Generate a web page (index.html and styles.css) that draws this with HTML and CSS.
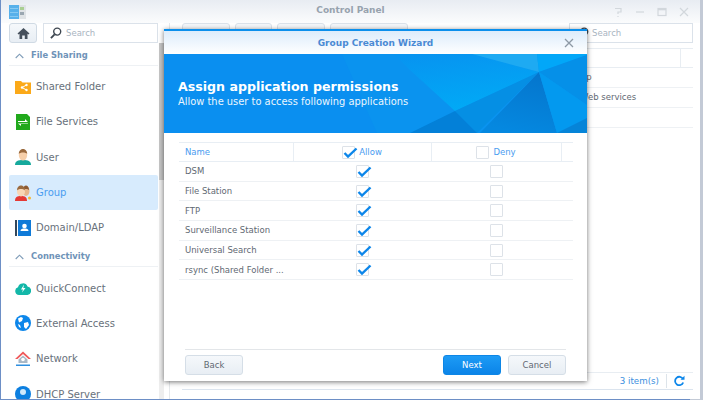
FILE: index.html
```html
<!DOCTYPE html>
<html lang="en">
<head>
<meta charset="utf-8">
<title>Control Panel</title>
<link rel="stylesheet" href="styles.css">
</head>
<body>
<div class="window">
  <header class="titlebar">
    <svg class="app-logo" width="17" height="14" viewBox="0 0 17 14"><rect x="0" y="0" width="10" height="14" fill="#57b0ea"/><rect x="1" y="3" width="8" height="1" fill="#86c9f2"/><rect x="1" y="7" width="8" height="1" fill="#86c9f2"/><rect x="1" y="11" width="8" height="1" fill="#86c9f2"/><rect x="10" y="0" width="7" height="14" fill="#dfe3e6"/><rect x="11" y="2" width="4" height="3" fill="#a9cf93"/><rect x="11" y="7" width="4" height="3" fill="#9aa7b1"/></svg>
    <span class="title">Control Panel</span>
    <div class="win-controls">
      <svg width="12" height="12" viewBox="0 0 12 12"><path d="M3 2.500h6v3.500H6v2M6 10v1" fill="none" stroke="#d2d7dc" stroke-width="1.200"/></svg>
      <svg width="12" height="12" viewBox="0 0 12 12"><path d="M2 6h8" stroke="#d2d7dc" stroke-width="1.200"/></svg>
      <svg width="12" height="12" viewBox="0 0 12 12"><rect x="2" y="2.500" width="8" height="7" fill="none" stroke="#d2d7dc" stroke-width="1.200"/><path d="M2 3.500h8" stroke="#d2d7dc" stroke-width="1.600"/></svg>
      <svg width="12" height="12" viewBox="0 0 12 12"><path d="M2 2l8 8M10 2l-8 8" stroke="#d2d7dc" stroke-width="1.200"/></svg>
    </div>
  </header>
  <div class="body">
    <aside class="sidebar">
      <div class="side-top">
        <button class="home-btn"><svg width="13" height="13" viewBox="0 0 13 13"><path d="M6.500 1L0.500 6.500 1.500 7.500 2.500 6.700V12H5.200V8.500H7.800V12H10.500V6.700L11.500 7.500 12.500 6.500Z" fill="#46505c"/></svg></button>
        <div class="search side-search">
          <svg width="12" height="12" viewBox="0 0 13 13"><circle cx="7.800" cy="5" r="3.800" fill="none" stroke="#3d4650" stroke-width="1.500"/><path d="M5 8L1 12" stroke="#3d4650" stroke-width="2"/></svg>
          <span>Search</span>
        </div>
      </div>
      <div class="section"><svg width="9" height="6" viewBox="0 0 9 6"><path d="M0.700 5L4.500 1.200 8.300 5" fill="none" stroke="#7f9cb8" stroke-width="1.100"/></svg><span>File Sharing</span></div>
      <div class="item">
        <svg width="16" height="14" viewBox="0 0 16 14"><path d="M0 1h6l1.500 1.500H16V14H0Z" fill="#fba919"/><circle cx="7" cy="7.500" r="1.200" fill="#fff"/><circle cx="11.500" cy="5" r="1.200" fill="#fff"/><circle cx="11.500" cy="10" r="1.200" fill="#fff"/><path d="M7 7.500L11.500 5M7 7.500L11.500 10" stroke="#fff"/></svg>
        <span>Shared Folder</span></div>
      <div class="item">
        <svg width="16" height="16" viewBox="0 0 16 16"><path d="M1 0h11l3 3v13H1Z" fill="#21a91c"/><path d="M3 7h7V5l3 3H3zM13 10H6v2L3 9.500h10z" fill="#fff"/></svg>
        <span>File Services</span></div>
      <div class="item">
        <svg width="16" height="16" viewBox="0 0 16 16"><path d="M0 16c0-4 3-5 8-5s8 1 8 5Z" fill="#16a99c"/><ellipse cx="8" cy="6" rx="4.200" ry="5.500" fill="#f6cfaa"/><path d="M3.800 5C3.800 1.500 6 0 8 0s4.200 1.500 4.200 5C11 3 5 3 3.800 5Z" fill="#9a6a3e"/></svg>
        <span>User</span></div>
      <div class="item active">
        <svg width="16" height="16" viewBox="0 0 16 16"><path d="M0 16c0-4 2-5 6-5s6 1 6 5Z" fill="#e53935"/><ellipse cx="11" cy="6" rx="3.500" ry="5" fill="#e8b68c"/><path d="M8 5c0-3 1.500-4.500 3-4.500S14 2 14 5C13 3.500 9 3.500 8 5Z" fill="#8c5a32"/><ellipse cx="6" cy="6.500" rx="4" ry="5" fill="#f8d6b5"/><path d="M2 5.500C2 2 4 .5 6 .5S10 2 10 5.500C9 3.500 3 3.500 2 5.500Z" fill="#9a6a3e"/><circle cx="14.500" cy="13" r="1.500" fill="#f7b731"/></svg>
        <span>Group</span></div>
      <div class="item">
        <svg width="16" height="16" viewBox="0 0 16 16"><rect x="0" y="0" width="2" height="16" fill="#33475b"/><rect x="3" y="0" width="13" height="16" fill="#0f7ad8"/><circle cx="9.500" cy="6" r="2.300" fill="#fff"/><path d="M5.500 11c0-2 2-2.500 4-2.500s4 .5 4 2.500Z" fill="#fff"/></svg>
        <span>Domain/LDAP</span></div>
      <div class="section conn"><svg width="9" height="6" viewBox="0 0 9 6"><path d="M0.700 5L4.500 1.200 8.300 5" fill="none" stroke="#7f9cb8" stroke-width="1.100"/></svg><span>Connectivity</span></div>
      <div class="item">
        <svg width="16" height="13" viewBox="0 0 16 13"><path d="M4 13A4 4 0 0 1 3 5.200 5 5 0 0 1 12.500 4.500 4.300 4.300 0 0 1 12.500 13Z" fill="#13b7a8"/><path d="M9 2.500L6 7.500h2L7 10.500 10.500 6H8.300Z" fill="#fff"/></svg>
        <span>QuickConnect</span></div>
      <div class="item">
        <svg width="16" height="16" viewBox="0 0 16 16"><circle cx="8" cy="8" r="8" fill="#0c86ea"/><path d="M3 3.500l3-1.500 2 1-1 3-3 1.500zM9 8l4-1 1 3-3 4-2-2zM3 9l2 1 1 3-2-1z" fill="#fff"/></svg>
        <span>External Access</span></div>
      <div class="item">
        <svg width="16" height="16" viewBox="0 0 16 16"><path d="M8 0.500L0 8h2.500L8 3l5.500 5H16Z" fill="#f0595a"/><path d="M3.500 8.500L8 4.500l4.500 4V12h-9Z" fill="#a9b8c6"/><circle cx="8" cy="8.500" r="1.800" fill="#fff"/><rect x="1" y="13.500" width="14" height="1.500" fill="#2f8fe0"/></svg>
        <span>Network</span></div>
      <div class="item">
        <svg width="16" height="16" viewBox="0 0 16 16"><circle cx="8" cy="8" r="8" fill="#0c7fe0"/><circle cx="8" cy="6" r="3" fill="#cfe8fb"/></svg>
        <span>DHCP Server</span></div>
    </aside>
    <div class="scrollbar"></div>
    <main class="main">
      <div class="toolbar">
        <div class="tool w48"></div><div class="tool w37"></div><div class="tool w48"></div><div class="tool w78"></div>
        <div class="search main-search">
          <svg width="12" height="12" viewBox="0 0 13 13"><circle cx="7.800" cy="5" r="3.800" fill="none" stroke="#3d4650" stroke-width="1.500"/><path d="M5 8L1 12" stroke="#3d4650" stroke-width="2"/></svg>
          <span>Search</span>
        </div>
      </div>
      <div class="grid">
        <div class="grid-head"><i></i></div>
        <div class="grid-row">Up</div>
        <div class="grid-row">Web services</div>
        <div class="grid-row"></div>
      </div>
      <div class="statusbar"><span class="count">3 item(s)</span>
        <svg width="12" height="12" viewBox="0 0 12 12"><path d="M10 4A4.200 4.200 0 1 0 10.200 7.500" fill="none" stroke="#0c86ea" stroke-width="1.800"/><path d="M7.500 4.800H11.500V.8Z" fill="#0c86ea"/></svg>
      </div>
    </main>
  </div>
</div>

<section class="dialog">
  <div class="dialog-head">
    <span>Group Creation Wizard</span>
    <svg width="10" height="10" viewBox="0 0 10 10"><path d="M1 1l8 8M9 1l-8 8" stroke="#8d99a5" stroke-width="1.300"/></svg>
  </div>
  <div class="banner">
    <svg class="facets" width="423" height="79" viewBox="0 0 423 79">
      <defs>
        <linearGradient id="bright" x1="0.200" y1="0" x2="0.500" y2="1"><stop offset="0" stop-color="#0794f0"/><stop offset="1" stop-color="#01aaf6"/></linearGradient>
        <linearGradient id="dark" x1="0.800" y1="0" x2="0.500" y2="1"><stop offset="0" stop-color="#0575cc"/><stop offset="1" stop-color="#0588e0"/></linearGradient>
      </defs>
      <path d="M178 0H423V79H213Z" fill="#0a93ef"/>
      <path d="M246 16L291 57 375 18 308 0H230Z" fill="url(#bright)"/>
      <path d="M308 0H373L375 18Z" fill="#1eaaf2"/>
      <path d="M373 0H423V1L375 18Z" fill="#02a7f8"/>
      <path d="M423 1V51L375 18Z" fill="#0590e8"/>
      <path d="M291 57L375 18 313 79Z" fill="#058fe4"/>
      <path d="M246 79L291 57 313 79Z" fill="#0380d8"/>
      <path d="M316 79L375 18 393 79Z" fill="url(#dark)"/>
      <path d="M375 18L423 51V64L393 79Z" fill="#0399ef"/>
      <path d="M393 79L423 64V79Z" fill="#0584d8"/>
    </svg>
    <h1>Assign application permissions</h1>
    <p>Allow the user to access following applications</p>
  </div>
  <div class="perm-wrap">
    <table class="perm">
      <thead><tr>
        <th class="c-name">Name</th>
        <th class="c-allow"><span class="th-in"><span class="cb on"><svg width="15" height="13" viewBox="0 0 15 13"><path d="M1.500 7L5 10.500 13.500 2.500" fill="none" stroke="#0c86ea" stroke-width="2.400"/></svg></span>Allow</span></th>
        <th class="c-deny"><span class="th-in"><span class="cb"></span>Deny</span></th>
        <th class="c-end"></th>
      </tr></thead>
      <tbody>
        <tr><td class="c-name">DSM</td><td><span class="cb on"><svg width="15" height="13" viewBox="0 0 15 13"><path d="M1.500 7L5 10.500 13.500 2.500" fill="none" stroke="#0c86ea" stroke-width="2.400"/></svg></span></td><td><span class="cb"></span></td><td></td></tr>
        <tr><td class="c-name">File Station</td><td><span class="cb on"><svg width="15" height="13" viewBox="0 0 15 13"><path d="M1.500 7L5 10.500 13.500 2.500" fill="none" stroke="#0c86ea" stroke-width="2.400"/></svg></span></td><td><span class="cb"></span></td><td></td></tr>
        <tr><td class="c-name">FTP</td><td><span class="cb on"><svg width="15" height="13" viewBox="0 0 15 13"><path d="M1.500 7L5 10.500 13.500 2.500" fill="none" stroke="#0c86ea" stroke-width="2.400"/></svg></span></td><td><span class="cb"></span></td><td></td></tr>
        <tr><td class="c-name">Surveillance Station</td><td><span class="cb on"><svg width="15" height="13" viewBox="0 0 15 13"><path d="M1.500 7L5 10.500 13.500 2.500" fill="none" stroke="#0c86ea" stroke-width="2.400"/></svg></span></td><td><span class="cb"></span></td><td></td></tr>
        <tr><td class="c-name">Universal Search</td><td><span class="cb on"><svg width="15" height="13" viewBox="0 0 15 13"><path d="M1.500 7L5 10.500 13.500 2.500" fill="none" stroke="#0c86ea" stroke-width="2.400"/></svg></span></td><td><span class="cb"></span></td><td></td></tr>
        <tr><td class="c-name">rsync (Shared Folder ...</td><td><span class="cb on"><svg width="15" height="13" viewBox="0 0 15 13"><path d="M1.500 7L5 10.500 13.500 2.500" fill="none" stroke="#0c86ea" stroke-width="2.400"/></svg></span></td><td><span class="cb"></span></td><td></td></tr>
      </tbody>
    </table>
  </div>
  <footer class="dialog-foot">
    <button class="btn">Back</button>
    <span class="grow"></span>
    <button class="btn primary">Next</button>
    <button class="btn">Cancel</button>
  </footer>
</section>
</body>
</html>
```

FILE: styles.css
```css
* { box-sizing: border-box; }
html, body { margin: 0; padding: 0; height: 100%; overflow: hidden; }
body {
  width: 703px; height: 400px; position: relative;
  background: linear-gradient(to right, #6d8fc6 0 690px, #c3cad6 690px);
  font-family: "DejaVu Sans", sans-serif; font-size: 8.500px; color: #505a64;
}
svg { display: block; flex: none; }
.window {
  position: absolute; left: 1px; top: 0; width: 699px; height: 399px;
  background: #fff; display: flex; flex-direction: column;
}
.titlebar {
  height: 23px; flex: none; position: relative; display: flex; align-items: center;
  background: linear-gradient(#e8ecf2, #fbfcfd);
  padding: 0 0 0 8px;
}
.title { position: absolute; left: 0; right: 0; top: 5px; text-align: center; color: #97a2ae; font-weight: bold; font-size: 9px; }
.win-controls { margin-left: auto; margin-right: 10px; display: flex; gap: 10px; }
.body { flex: 1; display: flex; min-height: 0; }
.sidebar { width: 158px; flex: none; overflow: hidden; padding-left: 8px; }
.side-top { display: flex; gap: 6px; width: 149px; }
.home-btn {
  width: 28px; height: 20px; padding: 0; display: flex; align-items: center; justify-content: center;
  background: linear-gradient(#f5f8fb, #e8eef4); border: 1px solid #d0dae4; border-radius: 3px;
}
.search {
  height: 20px; border: 1px solid #dbe2ea; background: #fff; display: flex; align-items: center;
  color: #a9b4bf; font-size: 8.500px;
}
.side-search { flex: 1; padding-left: 6px; gap: 4px; }
.section {
  height: 18px; margin: 5px 0 3px; width: 149px; display: flex; align-items: flex-start; gap: 7px; padding-left: 6px;
  border-bottom: 1px solid #eef1f4; color: #6f93b8; font-weight: bold; font-size: 8.400px;
}
.section svg { margin-top: 5px; }
.section span { line-height: 12px; margin-top: 1px; }
.conn { margin-top: 4px; }
.item {
  height: 35.300px; width: 149px; display: flex; align-items: center; padding-left: 6px; color: #68717b; font-size: 10px;
  border-radius: 2px; flex: none;
}
.item svg { margin-right: 5px; }
.active { background: #d7ebfd; color: #4a9cf0; }
.scrollbar { width: 5px; flex: none; background: linear-gradient(#c6c6c6 0 137px, #eee 137px); margin-top: 20px; }
.main { flex: 1; min-width: 0; display: flex; flex-direction: column; margin-left: 5px; padding: 0 7px 9px 12px; border-left: 1px solid #e6e9ec; }
.toolbar { display: flex; gap: 5px; height: 20px; flex: none; }
.tool { height: 20px; border: 1px solid #dbe2ea; border-radius: 3px; background: #f4f7fa; }
.w48 { width: 48px; } .w37 { width: 37px; } .w78 { width: 78px; }
.main-search { margin-left: auto; width: 124px; padding-left: 7px; gap: 3px; }
.grid { margin-top: 5px; flex: 1; }
.grid-head { height: 20px; border-top: 1px solid #e8edf2; border-bottom: 1px solid #e8edf2; position: relative; }
.grid-head i { position: absolute; right: 12px; top: 0; bottom: 0; border-left: 1px solid #e8edf2; }
.grid-row { height: 20px; border-bottom: 1px solid #eef1f4; line-height: 19px; padding-left: 398px; color: #5f6973; font-size: 8.500px; }
.statusbar {
  height: 18px; flex: none; border-top: 1px solid #e8edf2; border-bottom: 1px solid #dbe4ee;
  display: flex; justify-content: flex-end; align-items: center; padding-right: 8px; color: #3b8fe0;
}
.count { border-right: 1px solid #dde4ea; padding-right: 7px; margin-right: 6px; line-height: 14px; font-size: 8.700px; }

.dialog {
  position: absolute; left: 164px; top: 29px; width: 423px; height: 352px;
  background: #fff; box-shadow: 0 1px 5px rgba(0,0,0,.55);
  border-top: 2px solid #0a8fec; display: flex; flex-direction: column;
}
.dialog-head {
  height: 23px; flex: none; background: linear-gradient(#dcecfb, #fff); position: relative;
  display: flex; align-items: center; justify-content: center;
  color: #4a8ad4; font-weight: bold; font-size: 9px;
}
.dialog-head svg { position: absolute; right: 13px; top: 7px; }
.banner { height: 79px; flex: none; position: relative; background: #0a8ff0; color: #fff; padding: 25px 0 0 14px; overflow: hidden; }
.facets { position: absolute; left: 0; top: 0; }
.banner h1 { position: relative; margin: 0; font-size: 12.600px; line-height: 16px; font-weight: bold; }
.banner p { position: relative; margin: 0; font-size: 9.900px; line-height: 13px; opacity: .92; }
.perm-wrap { flex: 1; padding: 9px 14px 0 15px; }
.perm { width: 394px; border-collapse: collapse; table-layout: fixed; border-top: 1px solid #e8eef4; }
.perm th { height: 19px; font-weight: normal; color: #4a9cf0; font-size: 8.500px; border-bottom: 1px solid #e8eef4; padding: 0; }
.perm th + th { border-left: 1px solid #e8eef4; }
.perm td { height: 19.700px; padding: 0; border-bottom: 1px solid #eef1f4; color: #5f6973; font-size: 8.500px; }
.perm .c-name { width: 114px; padding-left: 6px; text-align: left; white-space: nowrap; }
.c-allow { width: 138px; }
.c-deny { width: 130px; }
.c-end { width: 12px; }
.th-in { display: flex; align-items: center; justify-content: center; gap: 4px; }
td .cb { margin: 0 auto; }
.cb { display: block; width: 13px; height: 13px; border: 1px solid #dde2e8; border-radius: 1px; position: relative; background: #fff; flex: none; }
.cb svg { position: absolute; left: 0; top: -1px; }
.dialog-foot { height: 32px; flex: none; margin: 0 21px; padding-top: 5px; border-top: 1px solid #e3e6e9; display: flex; gap: 7px; }
.grow { flex: 1; }
.btn {
  width: 58px; height: 20px; padding: 0; font: 8.500px "DejaVu Sans", sans-serif; color: #5f6973;
  background: linear-gradient(#f5f8fb, #e8eef4); border: 1px solid #d5dee7; border-radius: 3px;
}
.primary { background: linear-gradient(#1d9bf5, #0b84e8); border-color: #0d86e6; color: #fff; }
```
